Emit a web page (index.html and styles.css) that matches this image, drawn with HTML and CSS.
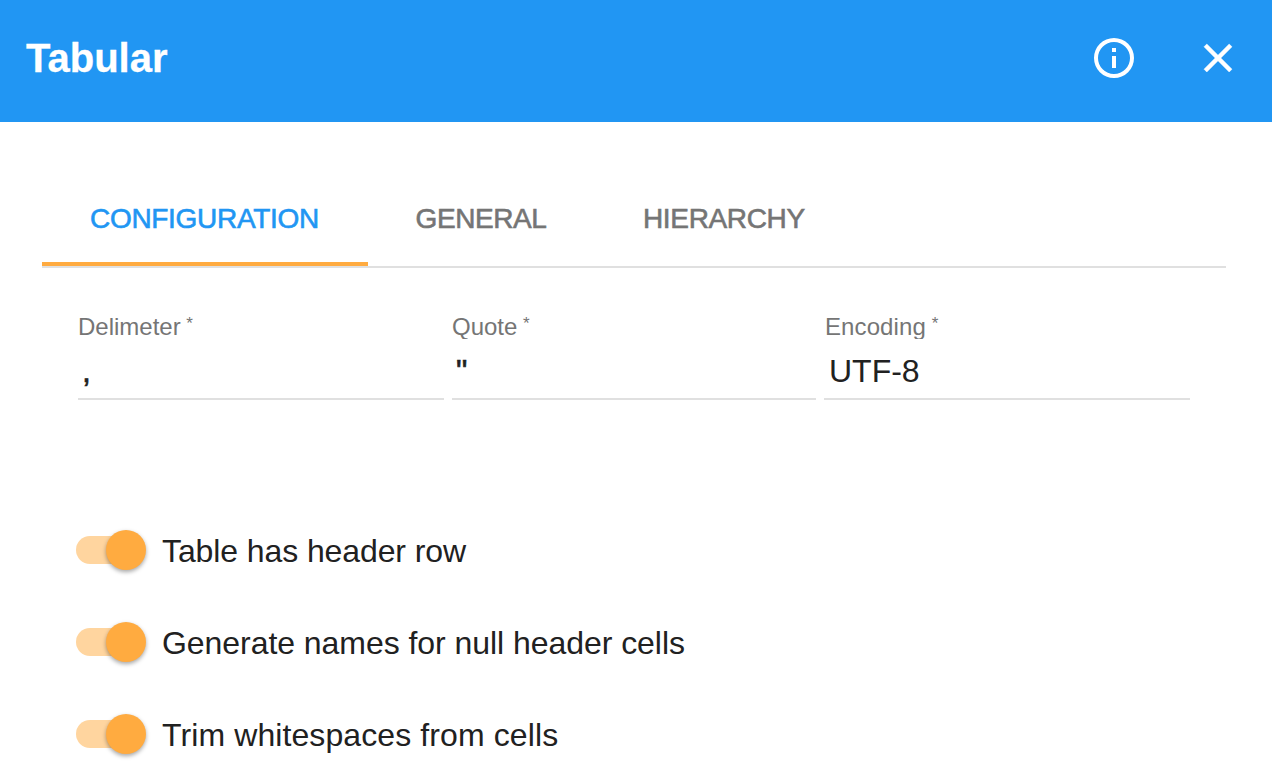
FILE: index.html
```html
<!DOCTYPE html>
<html lang="en">
<head>
<meta charset="utf-8">
<title>Tabular</title>
<link rel="stylesheet" href="styles.css">
</head>
<body>
<header class="toolbar">
  <h1 class="title">Tabular</h1>
  <button class="icon-button" aria-label="Information"><svg width="48" height="48" viewBox="0 0 24 24"><path d="M11 17h2v-6h-2zm1-15a10 10 0 1 0 0 20 10 10 0 0 0 0-20zm0 18a8 8 0 1 1 0-16 8 8 0 0 1 0 16zM11 9h2V7h-2z"/></svg></button>
  <button class="icon-button close" aria-label="Close"><svg width="48" height="48" viewBox="0 0 24 24"><path d="M19 6.41 17.59 5 12 10.59 6.41 5 5 6.41 10.59 12 5 17.59 6.41 19 12 13.41 17.59 19 19 17.59 13.41 12z"/></svg></button>
</header>
<main class="content">
  <nav class="tabs">
    <a class="tab active">CONFIGURATION</a>
    <a class="tab general">GENERAL</a>
    <a class="tab hierarchy">HIERARCHY</a>
  </nav>
  <section class="fields">
    <label class="field delimiter"><span class="caption">Delimeter <sup>*</sup></span><span class="value">,</span></label>
    <label class="field quote"><span class="caption">Quote <sup>*</sup></span><span class="value">"</span></label>
    <label class="field encoding"><span class="caption">Encoding <sup>*</sup></span><span class="value">UTF-8</span></label>
  </section>
  <section class="switches">
    <div class="option"><span class="switch"><span class="thumb"></span></span><span class="text header-row">Table has header row</span></div>
    <div class="option"><span class="switch"><span class="thumb"></span></span><span class="text null-cells">Generate names for null header cells</span></div>
    <div class="option"><span class="switch"><span class="thumb"></span></span><span class="text trim">Trim whitespaces from cells</span></div>
  </section>
</main>
</body>
</html>
```
FILE: styles.css
```css
* { box-sizing: border-box; }
body { margin: 0; height: 771px; overflow: hidden; background: #fff; color: #212121; font-family: "Liberation Sans", Arial, sans-serif; }
.toolbar { display: flex; align-items: center; height: 122px; padding: 0 30px 6px 26px; background: #2196f3; color: #fff; }
.title { flex: 1; margin: 0; font-size: 40px; line-height: 48px; font-weight: 700; -webkit-text-stroke: .3px; }
.icon-button { width: 48px; height: 48px; padding: 0; border: 0; background: none; }
.icon-button + .icon-button { margin-left: 56px; }
.icon-button svg { display: block; fill: #fff; }
.close svg { stroke: #fff; stroke-width: .25px; stroke-linejoin: round; }
.content { padding: 48px 46px 0 42px; }
.tabs { display: flex; height: 98px; border-bottom: 2px solid #e0e0e0; }
.tab { height: 96px; padding: 1px 48px 0; color: #757575; font-size: 28px; line-height: 96px; white-space: nowrap; -webkit-text-stroke: .6px; }
.active { width: 326px; border-bottom: 4px solid #ffab40; color: #2196f3; letter-spacing: -.3px; }
.general { width: 227px; padding-left: 47.5px; letter-spacing: -.4px; }
.hierarchy { letter-spacing: -.35px; }
.fields { display: grid; grid-template-columns: 366px 364px 366px; gap: 8px; padding: 42px 36px 0; }
.field { display: flex; flex-direction: column; height: 90px; border-bottom: 2px solid #e0e0e0; }
.caption { height: 29px; margin-bottom: 5px; overflow: hidden; color: #757575; font-size: 24px; line-height: 34px; white-space: nowrap; }
.caption sup { margin-left: -1px; font-size: 17px; line-height: 0; vertical-align: 6px; }
.encoding { padding-left: 1px; background: linear-gradient(#fff, #fff); }
.encoding .caption { letter-spacing: .1px; }
.delimiter .value, .quote .value { -webkit-text-stroke: .6px; }
.value { padding-left: 4px; font-size: 32px; line-height: 54px; }
.switches { display: grid; gap: 44px; padding: 126px 34px 0; }
.option { display: flex; align-items: center; height: 48px; gap: 16px; }
.switch { display: flex; align-items: center; justify-content: flex-end; width: 70px; height: 28px; border-radius: 14px; background: linear-gradient(90deg, #ffd59f 60px, transparent 60px); }
.thumb { width: 40px; height: 40px; border-radius: 50%; background: #ffab40; box-shadow: 0 2px 4px rgba(0,0,0,.35); }
.text { padding-top: 2px; font-size: 32px; line-height: 48px; white-space: nowrap; }
.header-row { letter-spacing: -.1px; }
.null-cells { letter-spacing: -.05px; }
.trim { letter-spacing: .1px; }
```
